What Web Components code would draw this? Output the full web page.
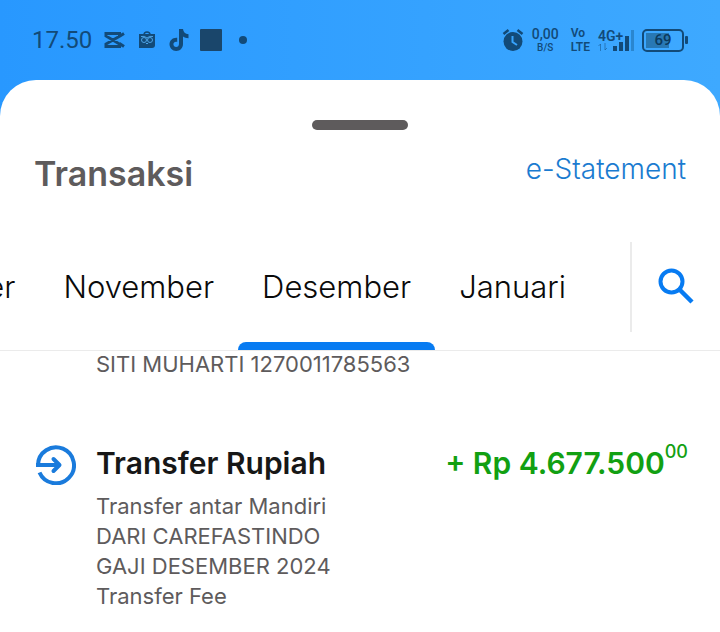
<!DOCTYPE html>
<html lang="id">
<head>
<meta charset="utf-8">
<meta name="viewport" content="width=device-width, initial-scale=1">
<title>Transaksi</title>
<style>
    html {
        height: 100%;
    }
    body {
        margin: 0;
        min-height: 100%;
        display: flex;
        flex-direction: column;
        background: linear-gradient(to right, #2898ff, #3ea9ff) top / 100% 140px no-repeat #fff;
        font-family: Inter, "Liberation Sans", sans-serif;
        --blue: #077bf2;
        --link: #1a7bd0;
        --grey: #5e5b5c;
        --green: #12a012;
        --status: #124a78;
    }
</style>
</head>
<body>
<status-bar></status-bar>
<bottom-sheet>
    <sheet-header>
        Transaksi
        <a slot="action" href="#statement">e-Statement</a>
    </sheet-header>
    <month-tabs months="Oktober,November,Desember,Januari" active="Desember"></month-tabs>
    <transaction-list>
        <transaction-item continued>
            <span>SITI MUHARTI 1270011785563</span>
        </transaction-item>
        <transaction-item name="Transfer Rupiah" amount="+ Rp 4.677.500" cents="00">
            <span>Transfer antar Mandiri</span>
            <span>DARI CAREFASTINDO</span>
            <span>GAJI DESEMBER 2024</span>
            <span>Transfer Fee</span>
        </transaction-item>
    </transaction-list>
</bottom-sheet>

<script>
class StatusBar extends HTMLElement {
    constructor() {
        super();
        this.attachShadow({ mode: 'open' });
    }

    connectedCallback() {
        this.shadowRoot.innerHTML = `
            <style>
                :host {
                    display: flex;
                    align-items: center;
                    justify-content: space-between;
                    height: 80px;
                    padding: 0 32px;
                    box-sizing: border-box;
                    color: var(--status);
                    font-family: Roboto, sans-serif;
                }
                .group {
                    display: flex;
                    align-items: center;
                }
                .left {
                    gap: 11px;
                }
                .right {
                    gap: 8px;
                }
                svg {
                    display: block;
                    flex: none;
                }
                .time {
                    font-size: 24px;
                    line-height: 28px;
                }
                .stack {
                    display: flex;
                    flex-direction: column;
                    align-items: center;
                    font-size: 10px;
                    line-height: 12px;
                    font-weight: 500;
                }
                .stack b {
                    font-size: 14px;
                    line-height: 16px;
                    font-weight: 500;
                }
                .lte {
                    align-items: flex-start;
                    margin-left: 4px;
                    font-size: 12px;
                    line-height: 14px;
                    font-weight: 600;
                }
                .signal {
                    display: grid;
                    width: 36px;
                    height: 24px;
                }
                .signal > * {
                    grid-area: 1 / 1;
                }
                .net {
                    font-size: 14px;
                    line-height: 16px;
                    font-weight: 600;
                }
                .battery {
                    display: flex;
                    align-items: center;
                    gap: 1px;
                }
                .cell {
                    width: 42px;
                    height: 23px;
                    box-sizing: border-box;
                    border: 2px solid var(--status);
                    border-radius: 5px;
                    padding: 2px;
                    font-size: 15px;
                    line-height: 15px;
                    font-weight: 500;
                    text-align: center;
                    background: linear-gradient(#2878b4, #2878b4) 2px 2px / 23px 15px no-repeat;
                    color: #0b3a5e;
                }
                .cap {
                    width: 3px;
                    height: 8px;
                    border-radius: 1px;
                    background: var(--status);
                }
            </style>
            <div class="group left">
                <span class="time">17.50</span>
                <svg width="22" height="18" viewBox="0 0 22 18" fill="none" stroke="currentColor" stroke-width="3">
                    <path d="M21 2.500L17 5L3 13v2.500h13.500V13L3 5V2.500h13.500V5M16.500 12.500L21 15.500"/>
                </svg>
                <svg width="22" height="20" viewBox="0 0 22 20">
                    <path d="M8 5C8 1 14 1 14 5" fill="none" stroke="currentColor" stroke-width="1.500"/>
                    <path d="M3 4h16v11q0 3-3 3H3z" fill="currentColor"/>
                    <g fill="none" stroke="#4da3e6">
                        <circle cx="8" cy="10" r="2.500"/>
                        <circle cx="14" cy="10" r="2.500"/>
                        <path d="M5 6.500q3.500-1 6 1.500q2.500-2.500 6-1.500M10 13l1 1l1-1"/>
                    </g>
                </svg>
                <svg width="20" height="22" viewBox="0 0 20 22" fill="currentColor">
                    <path d="M10 0h4c.3 3 2.200 5 5.500 5.300v4c-2.100 0-4-.6-5.500-1.700V15c0 4.200-3 7-6.800 7S.5 19 .5 15.300C.5 11.300 4 8.300 8.200 8.800V13C6 12.500 4.400 13.500 4.400 15.300c0 1.600 1.200 2.700 2.700 2.700 1.800 0 2.900-1.300 2.900-3.300z"/>
                </svg>
                <svg width="22" height="22" viewBox="0 0 22 22"><rect width="22" height="22" rx="1" fill="#1a466b"/></svg>
                <svg width="20" height="8" viewBox="0 0 20 8"><circle cx="10" cy="4" r="4" fill="currentColor"/></svg>
            </div>
            <div class="group right">
                <svg width="22" height="24" viewBox="0 0 22 24">
                    <circle cx="11" cy="13.500" r="9.500" fill="currentColor"/>
                    <path d="M1.500 6l5-4M20.500 6l-5-4" stroke="currentColor" stroke-width="2.500"/>
                    <path d="M10.500 8v6l4.500 3" fill="none" stroke="#37a3fc" stroke-width="2"/>
                </svg>
                <div class="stack"><b>0,00</b><span>B/S</span></div>
                <div class="stack lte"><span>Vo</span><span>LTE</span></div>
                <div class="signal">
                    <span class="net">4G+</span>
                    <svg width="36" height="24" viewBox="0 0 36 24">
                        <path d="M2.500 23v-7l-2 2M7 15v7l2-2" fill="none" stroke="currentColor" opacity=".5"/>
                        <path d="M15 18h4v5h-4zM21 14h4v9h-4zM27 8h4v15h-4z" fill="currentColor"/>
                        <path d="M33 2h3v21h-3z" fill="#2a86cf"/>
                    </svg>
                </div>
                <div class="battery"><div class="cell">69</div><div class="cap"></div></div>
            </div>
        `;
    }
}

class BottomSheet extends HTMLElement {
    constructor() {
        super();
        this.attachShadow({ mode: 'open' });
        this.shadowRoot.innerHTML = `
            <style>
                :host {
                    display: flex;
                    flex-direction: column;
                    flex: 1;
                    background: #fff;
                    border-radius: 36px 36px 0 0;
                }
                .handle {
                    width: 96px;
                    height: 10px;
                    margin: 40px auto 20px;
                    border-radius: 5px;
                    background: var(--grey);
                }
            </style>
            <div class="handle"></div>
            <slot></slot>
        `;
    }
}

class SheetHeader extends HTMLElement {
    constructor() {
        super();
        this.attachShadow({ mode: 'open' });
        this.shadowRoot.innerHTML = `
            <style>
                :host {
                    display: flex;
                    justify-content: space-between;
                    align-items: flex-start;
                    padding: 0 34px;
                }
                h1 {
                    margin: 0;
                    color: var(--grey);
                    font-size: 34px;
                    line-height: 48px;
                    font-weight: 600;
                }
                ::slotted(a) {
                    color: var(--link);
                    font-size: 28px;
                    line-height: 38px;
                    font-weight: 300;
                    text-decoration: none;
                }
            </style>
            <h1><slot></slot></h1>
            <slot name="action"></slot>
        `;
    }
}

class MonthTabs extends HTMLElement {
    constructor() {
        super();
        this.attachShadow({ mode: 'open' });
    }

    connectedCallback() {
        this.active = this.getAttribute('active');
        this.render();
    }

    render() {
        const months = this.getAttribute('months').split(',');

        this.shadowRoot.innerHTML = `
            <style>
                :host {
                    display: flex;
                    margin-top: 26px;
                    border-bottom: 1px solid #ebebeb;
                }
                .tabs {
                    flex: 1;
                    min-width: 0;
                    display: flex;
                    justify-content: flex-end;
                    overflow: hidden;
                    margin-right: 40px;
                }
                button {
                    background: none;
                    border: none;
                    margin: 0;
                    padding: 0;
                    cursor: pointer;
                    font: inherit;
                }
                .tab {
                    display: flex;
                    flex-direction: column;
                    flex: none;
                    color: #0a0a0a;
                    font-size: 31px;
                    line-height: 126px;
                    height: 126px;
                    font-weight: 300;
                }
                .label {
                    height: 118px;
                    padding: 0 24px;
                }
                .tab.active::after {
                    content: '';
                    height: 8px;
                    border-radius: 8px 8px 0 0;
                    background: var(--blue);
                }
                .search {
                    flex: none;
                    align-self: center;
                    display: flex;
                    align-items: center;
                    justify-content: center;
                    width: 90px;
                    height: 90px;
                    border-left: 2px solid #ebebeb;
                    color: var(--blue);
                }
            </style>
            <div class="tabs" role="tablist">
                ${months.map(month => `
                    <button class="tab ${month === this.active ? 'active' : ''}" role="tab" aria-selected="${month === this.active}" data-month="${month}"><span class="label">${month}</span></button>
                `).join('')}
            </div>
            <button class="search" aria-label="Cari">
                <svg width="36" height="38" viewBox="0 0 36 38" fill="none" stroke="currentColor" stroke-width="4">
                    <circle cx="13.500" cy="13.500" r="11"/>
                    <path d="M21.500 21.500L34 34" stroke-width="4.500"/>
                </svg>
            </button>
        `;

        this.shadowRoot.querySelectorAll('.tab').forEach(tab => {
            tab.onclick = () => {
                this.active = tab.dataset.month;
                this.render();
            };
        });
    }
}

class TransactionList extends HTMLElement {
    constructor() {
        super();
        this.attachShadow({ mode: 'open' });
        // list is scrolled slightly under the tabs
        this.shadowRoot.innerHTML = `
            <style>
                :host {
                    display: flex;
                    flex-direction: column;
                    gap: 36px;
                    margin-top: -2px;
                    padding: 0 32px 20px 36px;
                }
            </style>
            <slot></slot>
        `;
    }
}

class TransactionItem extends HTMLElement {
    constructor() {
        super();
        this.attachShadow({ mode: 'open' });
    }

    connectedCallback() {
        const continued = this.hasAttribute('continued');

        this.shadowRoot.innerHTML = `
            <style>
                :host {
                    display: grid;
                    grid-template-columns: 40px 1fr;
                    column-gap: 20px;
                }
                .icon {
                    display: block;
                    margin-top: 30px;
                }
                .body {
                    grid-column: 2;
                }
                .head {
                    display: flex;
                    justify-content: space-between;
                    padding: 26px 0 6px;
                    font-size: 30px;
                    line-height: 44px;
                    font-weight: 600;
                }
                h2 {
                    margin: 0;
                    font: inherit;
                    color: #171717;
                }
                .amount {
                    display: flex;
                    color: var(--green);
                }
                sup {
                    font-size: 18px;
                    line-height: 22px;
                    font-weight: 500;
                }
                ::slotted(span) {
                    display: block;
                    color: var(--grey);
                    font-size: 22px;
                    line-height: 30px;
                    font-weight: 400;
                }
            </style>
            ${continued ? '' : `
                <svg class="icon" width="40" height="40" viewBox="0 0 40 40" fill="none" stroke="#1a7bdc" stroke-width="4">
                    <path d="M0 20h23M2 20A18 18 0 1 1 3.500 27.500"/>
                    <path d="M17.500 14l6 6l-6 6" stroke-linejoin="round" stroke-linecap="round"/>
                </svg>
            `}
            <div class="body">
                ${continued ? '' : `
                    <div class="head">
                        <h2>${this.getAttribute('name')}</h2>
                        <div class="amount">${this.getAttribute('amount')}<sup>${this.getAttribute('cents')}</sup></div>
                    </div>
                `}
                <slot></slot>
            </div>
        `;
    }
}

customElements.define('status-bar', StatusBar);
customElements.define('bottom-sheet', BottomSheet);
customElements.define('sheet-header', SheetHeader);
customElements.define('month-tabs', MonthTabs);
customElements.define('transaction-list', TransactionList);
customElements.define('transaction-item', TransactionItem);
</script>
</body>
</html>
